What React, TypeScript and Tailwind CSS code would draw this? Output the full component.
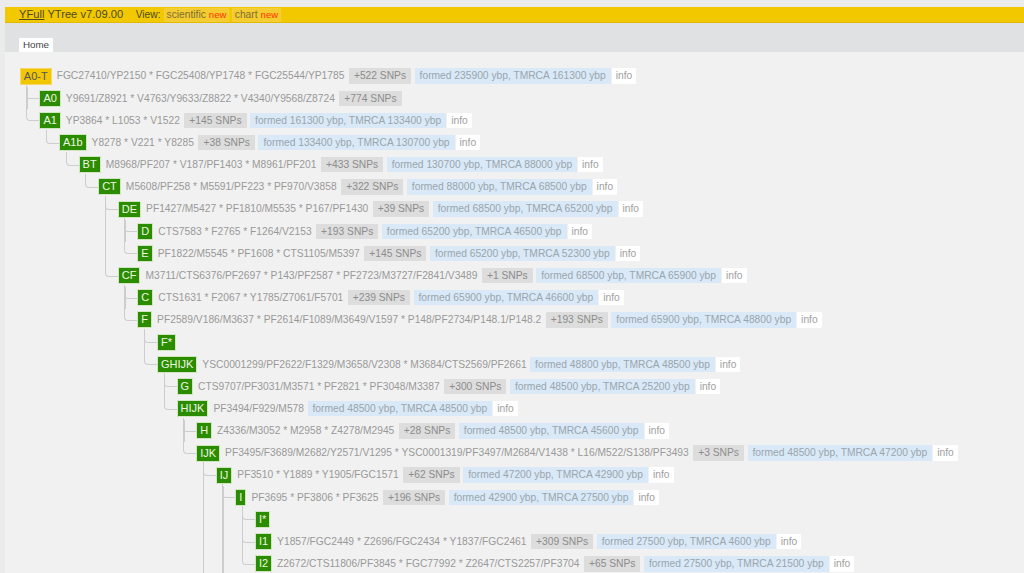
import React from "react";

type N = { n: string; s?: string; p?: number; f?: string; y?: boolean; c?: N[] };

const F = (a: number, b: number) => `formed ${a} ybp, TMRCA ${b} ybp`;

const tree: N = {
  n: "A0-T", y: true, s: "FGC27410/YP2150 * FGC25408/YP1748 * FGC25544/YP1785", p: 522, f: F(235900, 161300),
  c: [
    { n: "A0", s: "Y9691/Z8921 * V4763/Y9633/Z8822 * V4340/Y9568/Z8724", p: 774 },
    { n: "A1", s: "YP3864 * L1053 * V1522", p: 145, f: F(161300, 133400), c: [
      { n: "A1b", s: "Y8278 * V221 * Y8285", p: 38, f: F(133400, 130700), c: [
        { n: "BT", s: "M8968/PF207 * V187/PF1403 * M8961/PF201", p: 433, f: F(130700, 88000), c: [
          { n: "CT", s: "M5608/PF258 * M5591/PF223 * PF970/V3858", p: 322, f: F(88000, 68500), c: [
            { n: "DE", s: "PF1427/M5427 * PF1810/M5535 * P167/PF1430", p: 39, f: F(68500, 65200), c: [
              { n: "D", s: "CTS7583 * F2765 * F1264/V2153", p: 193, f: F(65200, 46500) },
              { n: "E", s: "PF1822/M5545 * PF1608 * CTS1105/M5397", p: 145, f: F(65200, 52300) },
            ] },
            { n: "CF", s: "M3711/CTS6376/PF2697 * P143/PF2587 * PF2723/M3727/F2841/V3489", p: 1, f: F(68500, 65900), c: [
              { n: "C", s: "CTS1631 * F2067 * Y1785/Z7061/F5701", p: 239, f: F(65900, 46600) },
              { n: "F", s: "PF2589/V186/M3637 * PF2614/F1089/M3649/V1597 * P148/PF2734/P148.1/P148.2", p: 193, f: F(65900, 48800), c: [
                { n: "F*" },
                { n: "GHIJK", s: "YSC0001299/PF2622/F1329/M3658/V2308 * M3684/CTS2569/PF2661", f: F(48800, 48500), c: [
                  { n: "G", s: "CTS9707/PF3031/M3571 * PF2821 * PF3048/M3387", p: 300, f: F(48500, 25200) },
                  { n: "HIJK", s: "PF3494/F929/M578", f: F(48500, 48500), c: [
                    { n: "H", s: "Z4336/M3052 * M2958 * Z4278/M2945", p: 28, f: F(48500, 45600) },
                    { n: "IJK", s: "PF3495/F3689/M2682/Y2571/V1295 * YSC0001319/PF3497/M2684/V1438 * L16/M522/S138/PF3493", p: 3, f: F(48500, 47200), c: [
                      { n: "IJ", s: "PF3510 * Y1889 * Y1905/FGC1571", p: 62, f: F(47200, 42900), c: [
                        { n: "I", s: "PF3695 * PF3806 * PF3625", p: 196, f: F(42900, 27500), c: [
                          { n: "I*" },
                          { n: "I1", s: "Y1857/FGC2449 * Z2696/FGC2434 * Y1837/FGC2461", p: 309, f: F(27500, 4600) },
                          { n: "I2", s: "Z2672/CTS11806/PF3845 * FGC77992 * Z2647/CTS2257/PF3704", p: 65, f: F(27500, 21500) },
                        ] },
                        { n: "" },
                      ] },
                      { n: "" },
                    ] },
                  ] },
                ] },
              ] },
            ] },
          ] },
        ] },
      ] },
    ] },
  ],
};

function Row({ node }: { node: N }) {
  return (
    <div className="flex h-[22.18px] items-center whitespace-nowrap text-[10.25px] text-[#999]">
      {node.n && (
        <span className={`relative z-10 flex h-[17px] items-center border border-solid px-[3px] text-[11px] leading-none ${node.y ? "border-[#f5d76a] bg-[#f2c600] text-[#555]" : "border-[#cfe6c0] bg-[#2b8c00] text-[#eef7e6]"}`}>
          {node.n}
        </span>
      )}
      {node.s && <span className="ml-[5px]">{node.s}</span>}
      {node.p !== undefined && <span className="ml-[4.5px] bg-[#dddddd] px-[5px] text-[#8c8c8c]">+{node.p} SNPs</span>}
      {node.f && <span className="ml-[3.5px] bg-[#d9e9f7] px-[5px] text-[#9aa5ad]">{node.f}</span>}
      {node.f && <span className="ml-[1px] bg-white px-[4px] text-[#a0a0a0]">info</span>}
    </div>
  );
}

function Node({ node, isLast, root }: { node: N; isLast?: boolean; root?: boolean }) {
  return (
    <li className={`relative ${root ? "" : "pl-[13px]"}`}>
      {!root && (
        <>
          {!isLast && <span className="absolute bottom-0 left-0 top-0 w-[1.5px] bg-[#cdcdcd]" />}
          {node.n && <span className="absolute left-0 top-[-2px] h-[14px] w-[13px] rounded-bl-[4px] border-b-[1.5px] border-l-[1.5px] border-solid border-[#cdcdcd]" />}
        </>
      )}
      <Row node={node} />
      {node.c && (
        <ul className="ml-[6.6px]">
          {node.c.map((k, i) => (
            <Node key={k.n + i} node={k} isLast={i === node.c!.length - 1 && k.n !== ""} />
          ))}
        </ul>
      )}
    </li>
  );
}

function Chip({ label }: { label: string }) {
  return (
    <span className="ml-[3.5px] flex h-[13.5px] items-center rounded-[1px] border border-solid border-[#f3cf3a] bg-[#f5cc30] px-[1.5px] text-[10.25px] text-[#7d6d35]">
      <span>
        {label}
        <span className="ml-[3px] text-[9.5px] text-[#ff3300]">new</span>
      </span>
    </span>
  );
}

export default function App() {
  return (
    <div className="flex h-[573px] w-[1024px] flex-col overflow-hidden bg-[#ebebec] pl-[5px] pt-[7px] font-['Liberation_Sans',Arial,sans-serif]">
      <div className="flex h-[16px] shrink-0 items-center border-b border-solid border-[#e3b800] bg-[#f2c900] pl-[14px] pt-[1px] text-[11.15px] leading-none text-[#4f4a1a]">
        <a className="underline">YFull</a>
        <span className="ml-[3px]">YTree v7.09.00</span>
        <span className="ml-[12.5px] text-[10.25px]">View:</span>
        <Chip label="scientific" />
        <Chip label="chart" />
      </div>
      <div className="h-[29px] shrink-0 bg-[#e0e1e3] pl-[14px] pt-[15px]">
        <div className="flex h-[14px] w-[34px] items-center justify-center bg-white text-[9.8px] leading-none text-[#444]">Home</div>
      </div>
      <div className="grow bg-[#f1f1f1] pl-[14.8px] pt-[13px]">
        <ul>
          <Node node={tree} root />
        </ul>
      </div>
    </div>
  );
}
